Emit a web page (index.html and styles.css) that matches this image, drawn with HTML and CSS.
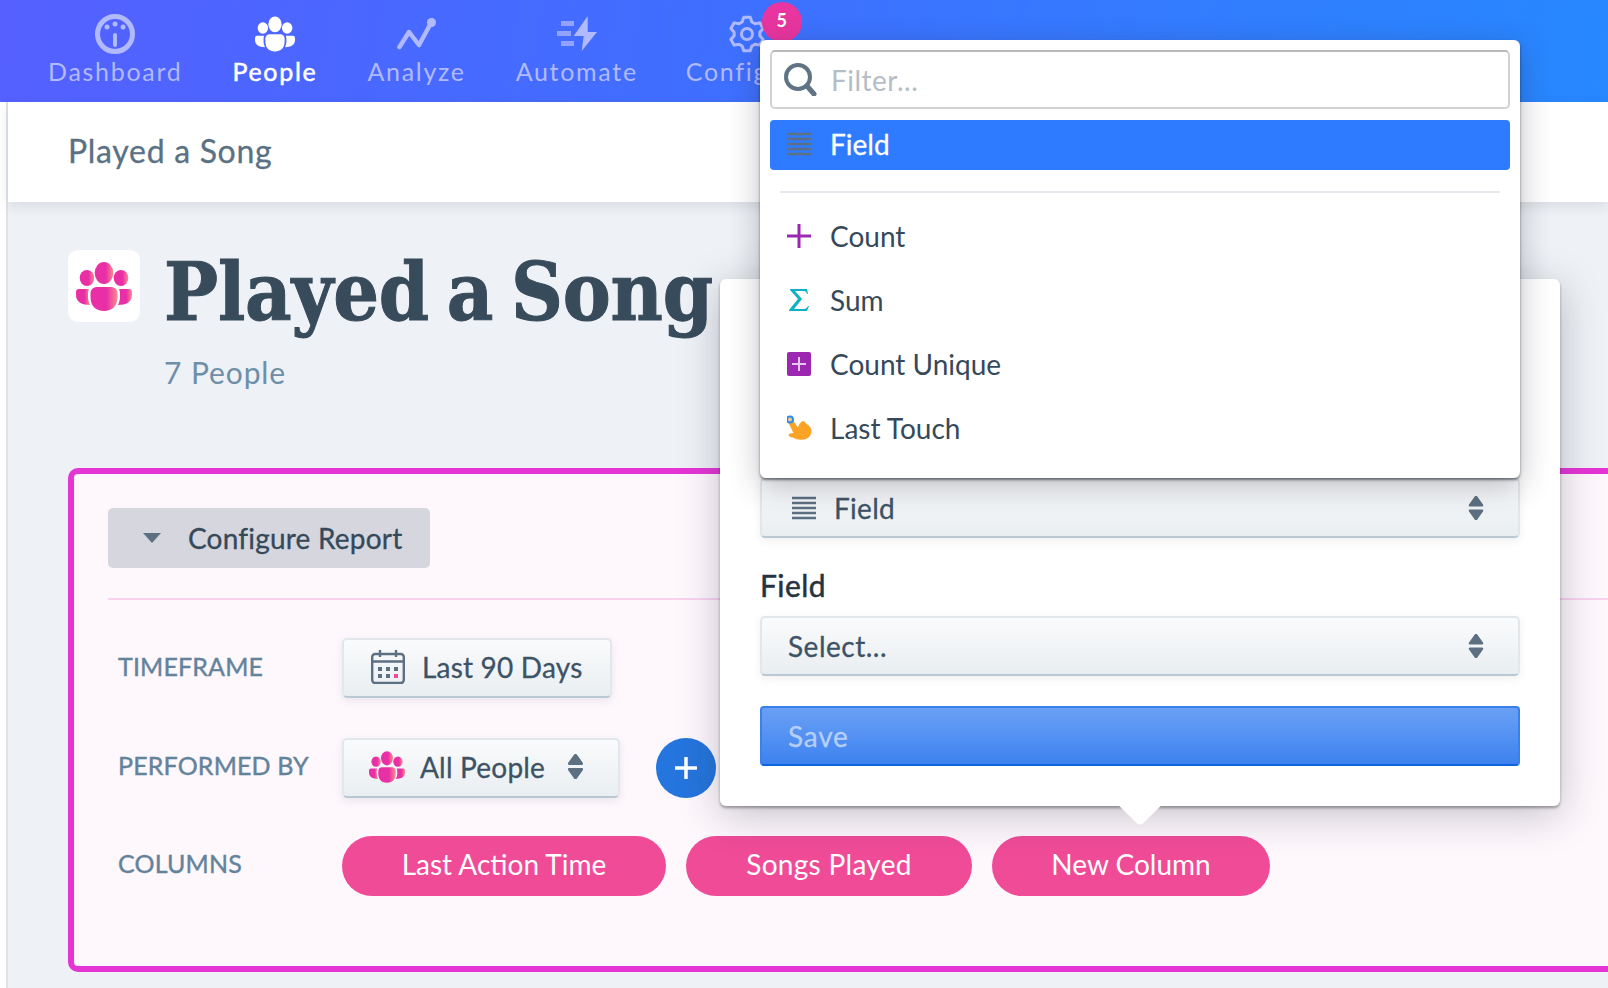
FILE: index.html
```html
<!DOCTYPE html>
<html lang="en">
<head>
    <meta charset="UTF-8">
    <meta name="viewport" content="width=device-width, initial-scale=1.0">
    <title>Played a Song</title>
    <link rel="stylesheet" href="styles.css">
</head>
<body>
    <svg class="defs" width="0" height="0">
        <defs>
            <linearGradient id="pink" x1="0" y1="0" x2="1" y2="0">
                <stop offset="0.6" stop-color="#e92fa5"/>
                <stop offset="1" stop-color="#fb8a8f"/>
            </linearGradient>
            <symbol id="people" viewBox="0 0 56 49">
                <ellipse cx="28" cy="11" rx="9.300" ry="11"/>
                <ellipse cx="11" cy="16" rx="7.300" ry="8"/>
                <ellipse cx="45" cy="16" rx="7.300" ry="8"/>
                <path d="M14.500 31a6 6 0 0 1 6-6h15a6 6 0 0 1 6 6v4c0 9-5.500 14-13.500 14s-13.500-5-13.500-14z"/>
                <path d="M0 30a3 3 0 0 1 3-3h10c-1 2-1 4-1 7 0 3 .5 6 2 9C6 43 0 40 0 33z"/>
                <path d="M56 30a3 3 0 0 0-3-3H43c1 2 1 4 1 7 0 3-.5 6-2 9 8 0 14-3 14-10z"/>
            </symbol>
            <symbol id="lines" viewBox="0 0 24 24">
                <path d="M0 2h24M0 7h24M0 12h24M0 17h24M0 22h24" fill="none" stroke="#5c7082" stroke-width="2.400"/>
            </symbol>
            <symbol id="updown" viewBox="0 0 16 24">
                <path d="M8 0c1 0 1.500.5 2 1.500l5 7c.6 1 .2 2-1 2H2c-1.200 0-1.600-1-1-2l5-7C6.500.5 7 0 8 0zM8 24c-1 0-1.500-.5-2-1.500l-5-7c-.6-1-.2-2 1-2h12c1.200 0 1.600 1 1 2l-5 7c-.5 1-1 1.500-2 1.500z" fill="#5c7082"/>
            </symbol>
        </defs>
    </svg>

    <nav class="topnav">
        <a class="nav-item">
            <svg class="nav-icon" viewBox="0 0 40 40" width="40" height="40">
                <circle cx="20" cy="20" r="17.500" fill="none" stroke="currentColor" stroke-width="5"/>
                <circle cx="20" cy="10" r="2.500" fill="currentColor"/>
                <circle cx="12" cy="13" r="2.500" fill="currentColor"/>
                <circle cx="28" cy="13" r="2.500" fill="currentColor"/>
                <path d="M20 21v10" stroke="currentColor" stroke-width="4" stroke-linecap="round"/>
            </svg>
            <span>Dashboard</span>
        </a>
        <a class="nav-item active">
            <svg class="nav-icon" width="40" height="36"><use href="#people"/></svg>
            <span>People</span>
        </a>
        <a class="nav-item">
            <svg class="nav-icon" viewBox="0 0 40 32" width="40" height="32">
                <path d="M2.500 29 12 14l10 13L34 5" fill="none" stroke="currentColor" stroke-width="4.500" stroke-linecap="round" stroke-linejoin="round"/>
                <circle cx="34.500" cy="4.500" r="4.500" fill="currentColor"/>
            </svg>
            <span>Analyze</span>
        </a>
        <a class="nav-item">
            <svg class="nav-icon" viewBox="0 0 40 36" width="40" height="36">
                <path d="M30.700 0 16.700 20h10l-2 15L40 16h-9.300z" fill="currentColor"/>
                <path d="M4 5h13v5H4zM0 15h14v5H0zM4 25h13v5H4z" fill="currentColor" opacity="0.7"/>
            </svg>
            <span>Automate</span>
        </a>
        <a class="nav-item nav-last">
            <svg class="nav-icon" viewBox="0 0 38 38" width="38" height="38">
                <circle cx="19" cy="19" r="5.500" fill="none" stroke="currentColor" stroke-width="3"/>
                <path d="M14.130 6.950 15.760 2.310H22.240L23.870 6.950 27 8.760 31.830 7.850 35.070 13.460 31.870 17.190V20.810L35.070 24.540 31.830 30.150 27 29.240 23.870 31.050 22.240 35.690H15.760L14.130 31.050 11 29.240 6.170 30.150 2.930 24.540 6.130 20.810V17.190L2.930 13.460 6.170 7.850 11 8.760z" fill="none" stroke="currentColor" stroke-width="3" stroke-linejoin="round"/>
            </svg>
            <span>Configure</span>
            <span class="badge">5</span>
        </a>
    </nav>

    <main class="main">
        <div class="subheader">Played a Song</div>

        <div class="page-title">
            <div class="title-icon">
                <svg class="people-pink" width="56" height="49"><use href="#people"/></svg>
            </div>
            <div>
                <h1>Played a Song</h1>
                <div class="count">7 People</div>
            </div>
        </div>

        <section class="report">
            <div class="config-toggle"><span class="caret"></span>Configure Report</div>
            <hr class="report-rule">

            <div class="report-row row-time">
                <div class="row-label">TIMEFRAME</div>
                <div class="btn">
                    <svg class="cal" viewBox="0 0 34 34" width="34" height="34">
                        <rect x="1.200" y="4" width="31.600" height="29" rx="3" fill="none" stroke="#5c7082" stroke-width="2.400"/>
                        <path d="M1 11.500h32M9 0v7M25 0v7" stroke="#5c7082" stroke-width="2.400"/>
                        <path d="M7 17h4v4H7zM15 17h4v4h-4zM23 17h4v4h-4zM7 24h4v4H7zM15 24h4v4h-4z" fill="#5c7082"/>
                        <path d="M23 24h4v4h-4z" fill="#f04b97"/>
                    </svg>
                    <span>Last 90 Days</span>
                </div>
            </div>

            <div class="report-row row-people">
                <div class="row-label low-label">PERFORMED BY</div>
                <div class="btn btn-people">
                    <svg class="people-pink" width="36" height="32"><use href="#people"/></svg>
                    <span>All People</span>
                    <svg class="btn-arrows" width="17" height="25"><use href="#updown"/></svg>
                </div>
                <div class="add-btn">
                    <svg viewBox="0 0 22 22" width="22" height="22"><path d="M11 0v22M0 11h22" stroke="#fff" stroke-width="3.500"/></svg>
                </div>
            </div>

            <div class="report-row row-cols">
                <div class="row-label low-label">COLUMNS</div>
                <div class="pills">
                    <div class="pill pill-a">Last Action Time</div>
                    <div class="pill pill-b">Songs Played</div>
                    <div class="pill pill-c">New Column</div>
                </div>
            </div>
        </section>
    </main>

    <!-- column editor, sits over the report -->
    <div class="popover">
        <div class="select">
            <svg width="24" height="24"><use href="#lines"/></svg>
            <span class="select-text">Field</span>
            <svg width="16" height="24"><use href="#updown"/></svg>
        </div>
        <label class="field-label">Field</label>
        <div class="select select-light">
            <span class="select-text">Select...</span>
            <svg width="16" height="24"><use href="#updown"/></svg>
        </div>
        <div class="save-btn">Save</div>
    </div>

    <!-- open dropdown on top of the editor -->
    <div class="dropdown">
        <div class="filter">
            <svg viewBox="0 0 33 33" width="33" height="33">
                <circle cx="14" cy="14" r="12" fill="none" stroke="#5f7385" stroke-width="4"/>
                <path d="M23 23l7 8" stroke="#5f7385" stroke-width="5" stroke-linecap="round"/>
            </svg>
            <span>Filter...</span>
        </div>
        <div class="dd-item selected">
            <svg width="24" height="24"><use href="#lines"/></svg>
            <span>Field</span>
        </div>
        <div class="dd-sep"></div>
        <div class="dd-item">
            <svg viewBox="0 0 24 24" width="24" height="24"><path d="M12 0v24M0 12h24" stroke="#9c27b0" stroke-width="3"/></svg>
            <span>Count</span>
        </div>
        <div class="dd-item">
            <svg viewBox="0 0 24 24" width="24" height="24"><path d="M3 1h17l1 5h-1c-.5-2-1.500-3-3-3H8l7 8-8 10h10c2 0 3-1 4-3h1l-2 5H2v-1l9-11L3 2z" fill="#0fb1c4"/></svg>
            <span>Sum</span>
        </div>
        <div class="dd-item">
            <svg viewBox="0 0 24 24" width="24" height="24"><rect width="24" height="24" rx="2" fill="#9c27b0"/><path d="M12 5v14M5 12h14" stroke="#e6c4ec" stroke-width="2"/></svg>
            <span>Count Unique</span>
        </div>
        <div class="dd-item">
            <svg class="touch" viewBox="0 0 26 26" width="26" height="26">
                <path d="M1 7 6 5 11 12.500Q12 8 15.500 6 18 6 19 8.500 24 11 24.500 16 24 22 19 24 11 26 6 22.500 2 22 1.500 20 2 18 6.500 18z" fill="#fba327"/>
                <circle cx="3" cy="4.500" r="3" fill="#f7c98e" stroke="#2e8df0" stroke-width="2"/>
            </svg>
            <span>Last Touch</span>
        </div>
    </div>
</body>
</html>
```
FILE: styles.css
```css
* {
    box-sizing: border-box;
}

html, body {
    height: 100%;
}

body {
    margin: 0;
    background: #fff;
    font-family: "Lato", "Open Sans", sans-serif;
    color: #35495a;
    overflow: hidden;
    position: relative;
}

.defs {
    position: absolute;
}

.topnav {
    height: 102px;
    display: flex;
    gap: 50px;
    padding-left: 48px;
    background: linear-gradient(100deg, #5560ff 0%, #3f6fff 45%, #2788ff 100%);
}

.nav-item {
    position: relative;
    display: flex;
    flex-direction: column;
    align-items: center;
    color: #b2baff;
    font-size: 25px;
    letter-spacing: 1.700px;
    line-height: 30px;
}

.nav-last {
    margin-left: -2px;
}

.nav-item .nav-icon {
    height: 40px;
    margin-top: 14px;
    margin-bottom: 2px;
    fill: currentColor;
}

.nav-item.active {
    color: #fff;
    -webkit-text-stroke: 0.5px #fff;
}

.badge {
    position: absolute;
    left: 76px;
    top: 2px;
    width: 40px;
    height: 40px;
    border-radius: 50%;
    background: #e8359f;
    color: #fff;
    font-size: 18px;
    font-weight: 700;
    letter-spacing: 0;
    line-height: 36px;
    text-align: center;
}

.main {
    margin-left: 6px;
    height: 886px;
    background: #eef1f5;
    border-left: 2px solid #dfe3e8;
}

.subheader {
    height: 100px;
    padding-left: 60px;
    padding-bottom: 2px;
    background: #fff;
    color: #5a7184;
    font-size: 32px;
    letter-spacing: 0.700px;
    line-height: 98px;
    -webkit-text-stroke: 0.3px #5a7184;
    box-shadow: 0 4px 12px rgba(60, 70, 90, 0.12);
}

.page-title {
    display: flex;
    gap: 26px;
    padding: 48px 0 0 60px;
    height: 266px;
}

.title-icon {
    width: 72px;
    height: 72px;
    display: flex;
    align-items: center;
    justify-content: center;
    background: #fff;
    border-radius: 10px;
}

.people-pink {
    fill: url(#pink);
}

h1 {
    margin: -8px 0 0 -2px;
    font-family: "DejaVu Serif", serif;
    font-stretch: condensed;
    font-weight: 700;
    font-size: 80px;
    line-height: 100px;
    letter-spacing: -0.200px;
    word-spacing: -7px;
    -webkit-text-stroke: 1px #384b5b;
    color: #384b5b;
}

.count {
    margin: 10px 0 0 -2px;
    color: #6f8fa8;
    font-size: 30px;
    letter-spacing: 0.900px;
    line-height: 40px;
}

.report {
    margin: 0 -100px 0 60px;
    height: 504px;
    padding: 34px 34px 0 34px;
    background: #fef8fd;
    border: 6px solid #e535d5;
    border-radius: 10px;
}

.config-toggle {
    width: 322px;
    height: 60px;
    display: flex;
    align-items: center;
    padding-left: 35px;
    gap: 27px;
    background: #d5d6de;
    border-radius: 5px;
    color: #35495a;
    font-size: 28px;
    letter-spacing: 0.200px;
    -webkit-text-stroke: 0.3px #35495a;
}

.caret {
    width: 0;
    height: 0;
    border-left: 9px solid transparent;
    border-right: 9px solid transparent;
    border-top: 10px solid #5c7082;
}

.report-rule {
    margin: 30px 0 0 0;
    border: 0;
    border-top: 2px solid #f9d2f0;
}

.report-row {
    display: flex;
    align-items: center;
    height: 60px;
}

.row-time { margin-top: 38px; }
.row-people { margin-top: 40px; }
.row-cols { margin-top: 38px; }

.row-label {
    width: 234px;
    padding: 0 0 5px 10px;
    color: #64839b;
    font-size: 25px;
    letter-spacing: 0.150px;
    -webkit-text-stroke: 0.4px #64839b;
}

.low-label {
    padding-bottom: 7px;
}

.btn {
    height: 60px;
    width: 270px;
    display: flex;
    align-items: center;
    gap: 17px;
    padding: 0 0 3px 27px;
    background: linear-gradient(#fafbfc, #e9eef1);
    border: 2px solid #e1e7eb;
    border-bottom-color: #b9c8d2;
    border-radius: 5px;
    box-shadow: 0 3px 8px rgba(60, 70, 90, 0.1);
    color: #3d5365;
    font-size: 28px;
    letter-spacing: 0.200px;
    -webkit-text-stroke: 0.3px #3d5365;
}

.btn-people {
    width: 278px;
    gap: 15px;
    padding-left: 25px;
}

.btn-arrows {
    margin-left: 7px;
}

.add-btn {
    width: 60px;
    height: 60px;
    margin-left: 36px;
    display: flex;
    align-items: center;
    justify-content: center;
    border-radius: 50%;
    background: #2475dd;
}

.pills {
    display: flex;
    gap: 20px;
}

.pill {
    height: 60px;
    border-radius: 30px;
    background: #f04b97;
    color: #fff;
    font-size: 28px;
    line-height: 56px;
    text-align: center;
}

.pill-a { width: 324px; }
.pill-b { width: 286px; letter-spacing: 0.300px; }
.pill-c { width: 278px; }

.popover {
    position: absolute;
    left: 720px;
    top: 279px;
    width: 840px;
    height: 527px;
    display: flex;
    flex-direction: column;
    justify-content: flex-end;
    padding: 0 40px 40px 40px;
    background: #fff;
    border-radius: 6px;
    box-shadow: 0 2px 3px rgba(0, 0, 0, 0.35), 0 8px 40px rgba(40, 40, 60, 0.28);
}

.popover::after {
    content: "";
    position: absolute;
    left: 404px;
    bottom: -14px;
    width: 32px;
    height: 32px;
    background: #fff;
    border-radius: 0 0 5px 0;
    transform: rotate(45deg);
}

.select {
    height: 60px;
    display: flex;
    align-items: center;
    gap: 18px;
    padding: 0 34px 0 30px;
    background: linear-gradient(#fafbfc, #e9eef1);
    border: 2px solid #e1e7eb;
    border-bottom-color: #b9c8d2;
    border-radius: 5px;
    box-shadow: 0 3px 8px rgba(60, 70, 90, 0.08);
    color: #3d5365;
    font-size: 28px;
    letter-spacing: 0.300px;
    -webkit-text-stroke: 0.3px #3d5365;
}

.select-text {
    flex: 1;
}

.select-light {
    padding-left: 26px;
    letter-spacing: 0.500px;
}

.field-label {
    margin: 29px 0 13px 0;
    color: #26333f;
    font-size: 30px;
    letter-spacing: 0.400px;
    line-height: 36px;
    -webkit-text-stroke: 0.5px #26333f;
}

.save-btn {
    height: 60px;
    margin-top: 30px;
    padding-left: 26px;
    background: linear-gradient(#6aa0f5, #3d82ef);
    border: 2px solid #3a80ec;
    border-bottom-color: #0d62df;
    border-radius: 4px;
    color: #b5cffa;
    font-size: 28px;
    letter-spacing: 0.800px;
    line-height: 56px;
    -webkit-text-stroke: 0.3px #b5cffa;
}

.dropdown {
    position: absolute;
    left: 760px;
    top: 40px;
    width: 760px;
    height: 438px;
    padding: 10px;
    background: #fff;
    border-radius: 6px;
    box-shadow: 0 2px 3px rgba(0, 0, 0, 0.45), 0 8px 30px rgba(40, 40, 60, 0.3);
}

.filter {
    height: 59px;
    display: flex;
    align-items: center;
    gap: 14px;
    padding-left: 12px;
    border: 2px solid #d0d2d4;
    border-top-color: #b8babc;
    border-radius: 5px;
    color: #b5bdc6;
    font-size: 28px;
    letter-spacing: 0.500px;
}

.dd-item {
    height: 64px;
    display: flex;
    align-items: center;
    gap: 19px;
    padding: 0 0 2px 17px;
    color: #35495a;
    font-size: 28px;
}

.dd-item svg {
    flex: none;
}

.dd-item .touch {
    margin-right: -2px;
}

.dd-item.selected {
    height: 50px;
    margin-top: 11px;
    background: #2e7bff;
    border-radius: 4px;
    color: #fff;
    -webkit-text-stroke: 0.3px #fff;
}

.dd-sep {
    height: 2px;
    margin: 21px 10px 12px 10px;
    background: #e6eaee;
}
```
